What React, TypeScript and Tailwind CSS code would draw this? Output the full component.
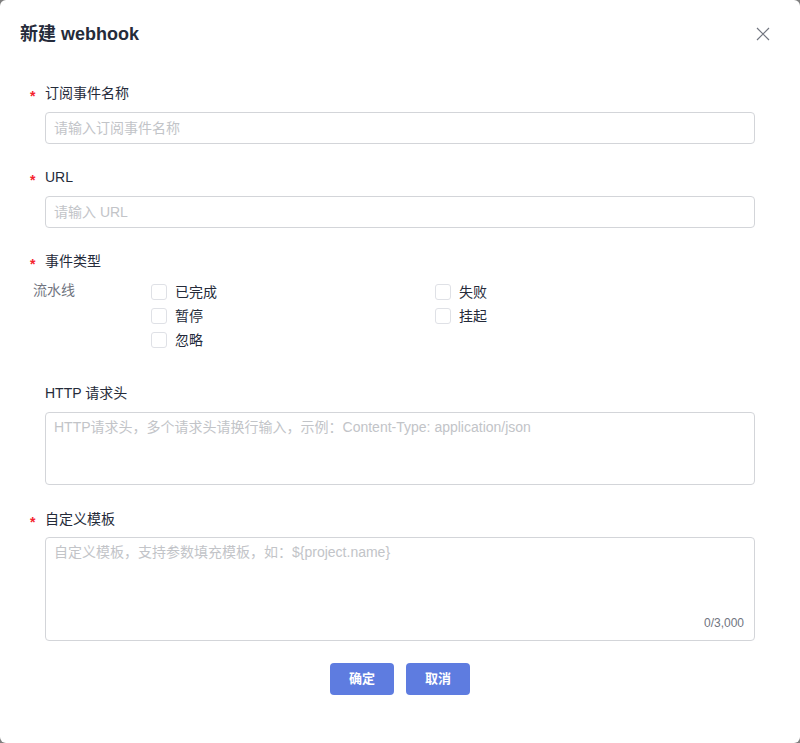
import React from "react";

const font = { fontFamily: '"Liberation Sans", Arial, "Noto Sans CJK SC", sans-serif' };

function Label({ text, required = true }: { text: string; required?: boolean }) {
  return (
    <div className="flex h-5 items-center">
      <span className="w-[12px] text-[14px] font-bold leading-5 text-[#f5222d] pt-[6px] ml-[30px] mr-[3px]">
        {required ? "*" : ""}
      </span>
      <span className="text-[14px] leading-5 text-[#252b3a]">{text}</span>
    </div>
  );
}

function Check({ text }: { text: string }) {
  return (
    <div className="flex h-6 items-center">
      <span className="box-border h-4 w-4 rounded-[3px] border border-[#dfe1e6] bg-white" />
      <span className="ml-2 text-[14px] leading-5 text-[#252b3a]">{text}</span>
    </div>
  );
}

export default function App() {
  return (
    <div className="h-[743px] w-[800px] bg-[#7f7f7f]" style={font}>
      <div className="relative h-[743px] w-[800px] rounded-[6px] bg-white">
        <div className="flex h-[83px] items-start justify-between pl-5 pr-[30px] pt-[22px]">
          <h1 className="text-[18px] font-bold leading-6 text-[#252b3a]">新建 webhook</h1>
          <svg width="14" height="14" viewBox="0 0 14 14" className="mt-[5px]">
            <path d="M1 1 L13 13 M13 1 L1 13" stroke="#71757f" strokeWidth="1.2" fill="none" />
          </svg>
        </div>

        <div className="flex flex-col">
          <Label text="订阅事件名称" />
          <div className="ml-[45px] mr-[45px] mt-[9px] box-border flex h-8 items-center rounded-[4px] border border-[#d3d5d9] px-2 text-[14px] text-[#c2c4c8]">
            请输入订阅事件名称
          </div>

          <div className="mt-[23px]">
            <Label text="URL" />
          </div>
          <div className="ml-[45px] mr-[45px] mt-[9px] box-border flex h-8 items-center rounded-[4px] border border-[#d3d5d9] px-2 text-[14px] text-[#c2c4c8]">
            请输入 URL
          </div>

          <div className="mt-[23px]">
            <Label text="事件类型" />
          </div>
          <div className="mt-[9px] flex">
            <div className="ml-[33px] w-[118px] text-[14px] leading-5 text-[#71757f]">流水线</div>
            <div className="grid grid-cols-[284px_1fr]">
              <Check text="已完成" />
              <Check text="失败" />
              <Check text="暂停" />
              <Check text="挂起" />
              <Check text="忽略" />
            </div>
          </div>

          <div className="mt-[31px] ml-[45px] h-5 text-[14px] leading-5 text-[#252b3a]">HTTP 请求头</div>
          <div className="ml-[45px] mr-[45px] mt-[9px] box-border h-[73px] rounded-[4px] border border-[#d3d5d9] px-2 pt-[4px] text-[14px] leading-5 text-[#c2c4c8]">
            HTTP请求头，多个请求头请换行输入，示例：Content-Type: application/json
          </div>

          <div className="mt-[24px]">
            <Label text="自定义模板" />
          </div>
          <div className="relative ml-[45px] mr-[45px] mt-[8px] box-border h-[104px] rounded-[4px] border border-[#d3d5d9] px-2 pt-[4px] text-[14px] leading-5 text-[#c2c4c8]">
            自定义模板，支持参数填充模板，如：${"{project.name}"}
            <span className="absolute bottom-[9px] right-[10px] text-[12px] leading-4 text-[#71757f]">0/3,000</span>
          </div>

          <div className="mt-[22px] flex justify-center gap-3">
            <button className="h-8 w-16 rounded-[4px] bg-[#5e7ce0] text-[13px] font-bold text-white">确定</button>
            <button className="h-8 w-16 rounded-[4px] bg-[#5e7ce0] text-[13px] font-bold text-white">取消</button>
          </div>
        </div>
      </div>
    </div>
  );
}
